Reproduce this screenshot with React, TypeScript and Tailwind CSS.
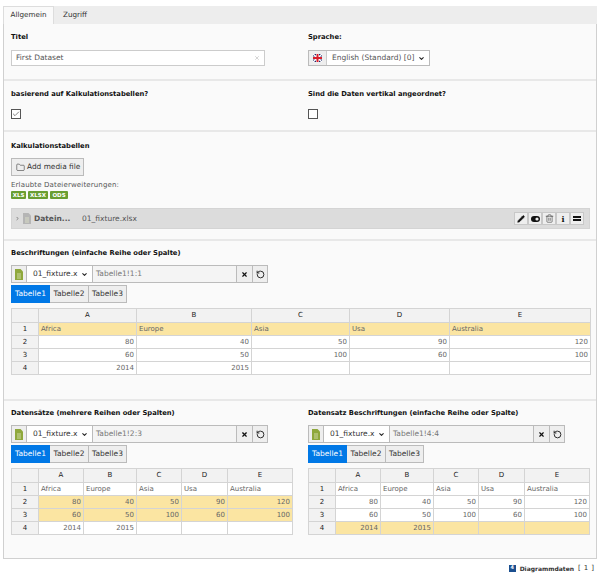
import { Folder, X, RotateCcw, ChevronDown, ChevronRight, Trash2, Pencil, Check } from 'lucide-react'

// Dataset record form

const sheet = [
  ['Africa', 'Europe', 'Asia', 'Usa', 'Australia'],
  ['80', '40', '50', '90', '120'],
  ['60', '50', '100', '60', '100'],
  ['2014', '2015', '', '', ''],
]

const letters = ['A', 'B', 'C', 'D', 'E']

function Label({ children }: { children: React.ReactNode }) {
  return <div className="text-[6.75px] leading-[10px] font-bold text-[#111]">{children}</div>
}

function FileIcon({ color = '#8fa83c' }: { color?: string }) {
  return (
    <svg width="8" height="11" viewBox="0 0 8 11">
      <path d="M0 0h5.5L8 2.5V11H0z" fill={color} />
      <path d="M2 5h4M2 7h4M2 9h4" stroke="#e8eccf" strokeWidth="0.7" />
    </svg>
  )
}

function RangePicker({ range }: { range: string }) {
  return (
    <div>
      <div className="flex h-[18px] text-[7.5px] text-[#333]">
        <div className="flex w-[16px] items-center justify-center border border-[#bbb] bg-[#eee]">
          <FileIcon />
        </div>
        <div className="flex w-[65px] items-center justify-between border-y border-[#bbb] bg-white pr-1 pl-[6px]">
          <span>01_fixture.x</span>
          <ChevronDown size={7} strokeWidth={3.5} className="shrink-0 text-[#222]" />
        </div>
        <div className="flex w-[145px] items-center border border-[#bbb] bg-[#f4f4f4] pl-[3px] text-[#777]">{range}</div>
        <div className="flex w-[15px] items-center justify-center border-y border-[#bbb] bg-[#eee]">
          <X size={7} strokeWidth={4} className="text-[#111]" />
        </div>
        <div className="flex w-4 items-center justify-center border border-[#bbb] bg-[#eee]">
          <RotateCcw size={9} strokeWidth={2.5} className="text-[#222]" />
        </div>
      </div>
      <div className="mt-[2px] flex h-[18px] text-[7.5px]">
        <div className="flex w-[39px] items-center justify-center bg-[#0078e6] text-white">Tabelle1</div>
        <div className="flex w-[38px] items-center justify-center border-y border-[#bbb] bg-[#eee] text-[#333]">Tabelle2</div>
        <div className="flex w-[39px] items-center justify-center border border-[#bbb] bg-[#eee] text-[#333]">Tabelle3</div>
      </div>
    </div>
  )
}

function Sheet({ cols, hiRows }: { cols: number[]; hiRows: number[] }) {
  return (
    <table className="table-fixed border-collapse text-[7px] text-[#666]">
      <colgroup>
        {cols.map((w, i) => (
          <col key={i} style={{ width: w }} />
        ))}
      </colgroup>
      <thead>
        <tr className="h-[14px]">
          <th className="border border-[#d4d4d4] bg-[#f2f2f2]" />
          {letters.map(l => (
            <th key={l} className="border border-[#d4d4d4] bg-[#f2f2f2] text-center font-normal text-[#222]">
              {l}
            </th>
          ))}
        </tr>
      </thead>
      <tbody>
        {sheet.map((row, r) => (
          <tr key={r} className="h-[13px]">
            <td className="border border-[#d4d4d4] bg-[#f2f2f2] text-center text-[#222]">{r + 1}</td>
            {row.map((v, c) => (
              <td
                key={c}
                className={`border border-[#d4d4d4] px-[2px] ${hiRows.includes(r) ? 'bg-[#fbe5a2]' : 'bg-white'} ${r === 0 ? 'text-left' : 'text-right'}`}
              >
                {v}
              </td>
            ))}
          </tr>
        ))}
      </tbody>
    </table>
  )
}

function Badge({ children, width }: { children: React.ReactNode; width: string }) {
  return <span className={`flex h-[8px] items-center justify-center rounded-[1px] bg-[#6a9e32] text-[5.5px] font-bold text-white ${width}`}>{children}</span>
}

function ToolBtn({ children }: { children: React.ReactNode }) {
  return <div className="flex h-[13px] w-[14px] items-center justify-center border border-[#c8c8c8] bg-[#eee] text-[#111]">{children}</div>
}

export default function App() {
  return (
    <div className="h-[575px] w-[600px] overflow-hidden bg-white pt-[6px] pl-[3px] font-['DejaVu_Sans',sans-serif]">
      <div className="w-[594px]">
        {/* Tabs */}
        <div className="flex h-[18px] bg-[#ededed] text-[7.2px] text-[#333]">
          <div className="flex w-[51px] items-center justify-center border-x border-t border-[#ddd] bg-[#fafafa]">Allgemein</div>
          <div className="flex w-[42px] items-center justify-center">Zugriff</div>
        </div>

        <div className="border-x border-b border-[#d0d0d0] bg-[#fafafa]">
          {/* Titel / Sprache */}
          <div className="flex h-[57px] border-b-2 border-[#e8e8e8] pt-[8px] pl-[7px]">
            <div className="w-[297px]">
              <Label>Titel</Label>
              <div className="mt-[8px] flex h-[16px] w-[254px] items-center justify-between border border-[#ccc] bg-white px-[4px] text-[7.5px] text-[#555]">
                <span>First Dataset</span>
                <X size={6} className="text-[#aaa]" />
              </div>
            </div>
            <div>
              <Label>Sprache:</Label>
              <div className="mt-[8px] flex h-[16px] w-[122px] items-center border border-[#bbb] bg-white text-[7.5px] text-[#555]">
                <div className="flex h-full w-[18px] items-center justify-center border-r border-[#ccc] bg-[#eee]">
                  <svg width="9" height="8" viewBox="0 0 9 8">
                    <rect width="9" height="8" fill="#1b2a6b" />
                    <path d="M0 0l9 8M9 0L0 8" stroke="#fff" strokeWidth="1.4" />
                    <path d="M4.5 0v8M0 4h9" stroke="#fff" strokeWidth="3" />
                    <path d="M4.5 0v8M0 4h9" stroke="#d81e2c" strokeWidth="2" />
                  </svg>
                </div>
                <span className="ml-[5px] flex-1">English (Standard) [0]</span>
                <ChevronDown size={7} strokeWidth={3.5} className="mr-[4px] text-[#222]" />
              </div>
            </div>
          </div>

          {/* Checkboxes */}
          <div className="flex h-[51px] border-b-2 border-[#e8e8e8] pt-[8px] pl-[7px]">
            <div className="w-[297px]">
              <Label>basierend auf Kalkulationstabellen?</Label>
              <div className="mt-[10px] flex h-[10px] w-[10px] items-center justify-center border border-[#555] bg-white">
                <Check size={8} strokeWidth={2} className="text-[#444]" />
              </div>
            </div>
            <div>
              <Label>Sind die Daten vertikal angeordnet?</Label>
              <div className="mt-[10px] h-[10px] w-[10px] border border-[#555] bg-white" />
            </div>
          </div>

          {/* Kalkulationstabellen */}
          <div className="h-[109px] border-b-2 border-[#e8e8e8] pt-[9px] pl-[7px]">
            <Label>Kalkulationstabellen</Label>
            <div className="mt-[7px] flex h-[18px] w-[73px] items-center gap-[2px] border border-[#bbb] bg-[#eee] pl-[4px] text-[7.4px] text-[#333]">
              <Folder size={9} strokeWidth={1.5} className="shrink-0" />
              Add media file
            </div>
            <div className="mt-[5px] text-[7px] leading-[9px] tracking-[0.15px] text-[#555]">Erlaubte Dateierweiterungen:</div>
            <div className="mt-[1px] flex gap-[2px]">
              <Badge width="w-[15px]">XLS</Badge>
              <Badge width="w-[20px]">XLSX</Badge>
              <Badge width="w-[18px]">ODS</Badge>
            </div>
            <div className="mt-[9px] flex h-[21px] w-[579px] items-center border border-[#d4d4d4] bg-[#dcdcdc] text-[7.5px] text-[#555]">
              <ChevronRight size={5} strokeWidth={3} className="ml-[3px]" />
              <span className="ml-[3px]">
                <FileIcon color="#b5b5b5" />
              </span>
              <span className="ml-[3px] w-[48px] font-bold">Datein...</span>
              <span>01_fixture.xlsx</span>
              <div className="mr-[5px] ml-auto flex">
                <ToolBtn>
                  <Pencil size={8} fill="#111" strokeWidth={1.5} />
                </ToolBtn>
                <ToolBtn>
                  <svg width="9" height="6" viewBox="0 0 9 6">
                    <rect width="9" height="6" rx="3" fill="#111" />
                    <circle cx="6" cy="3" r="1.6" fill="#eee" />
                  </svg>
                </ToolBtn>
                <ToolBtn>
                  <Trash2 size={9} strokeWidth={1.5} className="text-[#333]" />
                </ToolBtn>
                <ToolBtn>
                  <span className="font-['DejaVu_Serif',serif] text-[8px] font-bold">i</span>
                </ToolBtn>
                <ToolBtn>
                  <svg width="8" height="5" viewBox="0 0 8 5">
                    <path d="M0 0h8v2H0zM0 3h8v2H0z" fill="#111" />
                  </svg>
                </ToolBtn>
              </div>
            </div>
          </div>

          {/* Beschriftungen */}
          <div className="h-[160px] border-b-2 border-[#e8e8e8] pt-[7px] pl-[7px]">
            <Label>Beschriftungen (einfache Reihe oder Spalte)</Label>
            <div className="mt-[7px]">
              <RangePicker range="Tabelle1!1:1" />
            </div>
            <div className="mt-[5px]">
              <Sheet cols={[27, 98, 115, 98, 100, 141]} hiRows={[0]} />
            </div>
          </div>

          {/* Datensaetze */}
          <div className="flex h-[157px] pt-[7px] pl-[7px]">
            <div className="w-[297px]">
              <Label>Datensätze (mehrere Reihen oder Spalten)</Label>
              <div className="mt-[7px]">
                <RangePicker range="Tabelle1!2:3" />
              </div>
              <div className="mt-[5px]">
                <Sheet cols={[27, 45, 53, 45, 46, 65]} hiRows={[1, 2]} />
              </div>
            </div>
            <div>
              <Label>Datensatz Beschriftungen (einfache Reihe oder Spalte)</Label>
              <div className="mt-[7px]">
                <RangePicker range="Tabelle1!4:4" />
              </div>
              <div className="mt-[5px]">
                <Sheet cols={[27, 45, 53, 45, 46, 65]} hiRows={[3]} />
              </div>
            </div>
          </div>
        </div>

        {/* Footer link */}
        <div className="mt-[4px] flex h-[10px] items-center justify-end gap-[4px] text-[6px] text-[#333]">
          <span className="flex h-[7px] w-[7px] items-center justify-center bg-[#1b4f8f] text-[5px] font-bold text-white">4</span>
          <span className="font-bold">Diagrammdaten</span>
          <span className="text-[7px] tracking-[3px]">[1]</span>
        </div>
      </div>
    </div>
  )
}
